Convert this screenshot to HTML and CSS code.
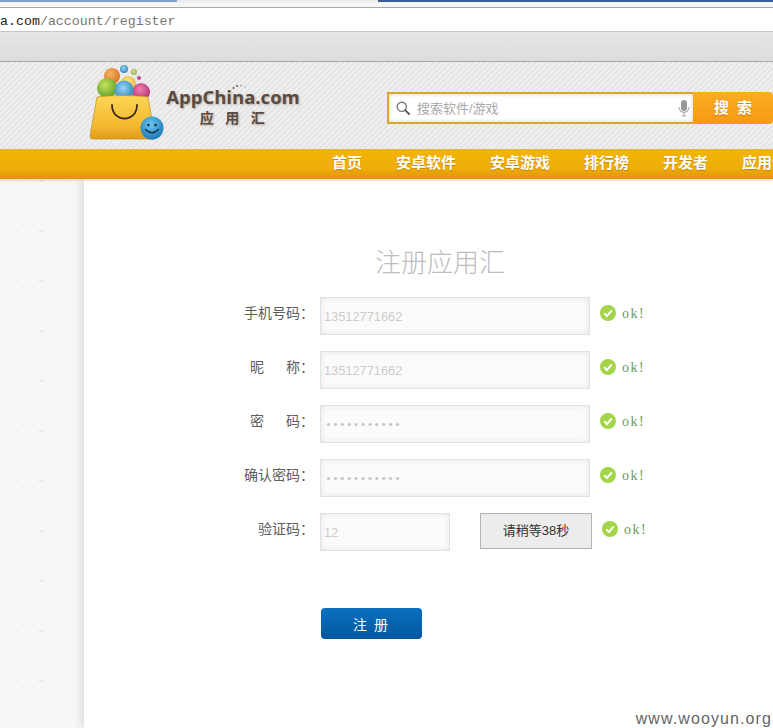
FILE: index.html
```html
<!DOCTYPE html>
<html lang="zh-CN">
<head>
  <meta charset="UTF-8">
  <title>注册应用汇</title>
  <link rel="stylesheet" href="styles.css">
</head>
<body>

  <div class="tabs">
    <span class="tab-left"></span>
    <span class="tab-right"></span>
  </div>
  <div class="urlbar">a.com<span class="url-path">/account/register</span></div>
  <div class="toolbar"></div>

  <div class="header">
    <div class="logo">
      <svg class="logo-bag" viewBox="88 64 80 80" width="80" height="80">
        <defs>
          <radialGradient id="ball-green" cx=".4" cy=".35" r=".75"><stop offset="0" stop-color="#cbe05a"/><stop offset="1" stop-color="#4a9a2a"/></radialGradient>
          <radialGradient id="ball-blue" cx=".45" cy=".4" r=".75"><stop offset="0" stop-color="#96d8f0"/><stop offset="1" stop-color="#1a74b4"/></radialGradient>
          <radialGradient id="ball-pink" cx=".45" cy=".35" r=".75"><stop offset="0" stop-color="#f083b2"/><stop offset="1" stop-color="#a81c6a"/></radialGradient>
          <radialGradient id="ball-orange" cx=".4" cy=".35" r=".75"><stop offset="0" stop-color="#f8b566"/><stop offset="1" stop-color="#d46c18"/></radialGradient>
          <radialGradient id="ball-yellow" cx=".45" cy=".4" r=".75"><stop offset="0" stop-color="#fcec90"/><stop offset="1" stop-color="#e0ac24"/></radialGradient>
          <radialGradient id="ball-lime" cx=".45" cy=".4" r=".75"><stop offset="0" stop-color="#cfe08a"/><stop offset="1" stop-color="#7fa53a"/></radialGradient>
          <radialGradient id="ball-face" cx=".45" cy=".35" r=".7"><stop offset="0" stop-color="#6cc8f2"/><stop offset="1" stop-color="#1672b4"/></radialGradient>
          <linearGradient id="bag-body" x1="0" y1="0" x2="0" y2="1"><stop offset="0" stop-color="#fcd655"/><stop offset=".7" stop-color="#f5b82f"/><stop offset="1" stop-color="#e09a1c"/></linearGradient>
        </defs>
        <circle cx="124" cy="69" r="4" fill="url(#ball-blue)"/>
        <circle cx="134" cy="72" r="3" fill="url(#ball-lime)"/>
        <circle cx="139" cy="78" r="2" fill="#c04a90"/>
        <circle cx="112" cy="76" r="8" fill="url(#ball-orange)"/>
        <circle cx="128" cy="84" r="8" fill="url(#ball-yellow)"/>
        <circle cx="107" cy="88" r="10" fill="url(#ball-green)"/>
        <circle cx="141" cy="92" r="9" fill="url(#ball-pink)"/>
        <circle cx="124" cy="90" r="9.500" fill="url(#ball-blue)"/>
        <path d="M97 97 C112 95 135 95 148 97 L155 137 Q155 139 152 139 L93 139 Q90 139 90 136 Z" fill="url(#bag-body)" stroke="#c58f1e" stroke-width=".7"/>
        <path d="M112 105 C112 123 137 123 137 105" fill="none" stroke="#3a2c16" stroke-width="1.800" stroke-linecap="round"/>
        <circle cx="152" cy="128" r="11.500" fill="url(#ball-face)"/>
        <circle cx="148.500" cy="125" r="1.300" fill="#15304a"/>
        <circle cx="155.500" cy="125" r="1.300" fill="#15304a"/>
        <path d="M145.500 129.500 Q152 136 158.500 129.500" fill="none" stroke="#15304a" stroke-width="1.500" stroke-linecap="round"/>
      </svg>
      <div class="logo-text">
        <svg class="logo-dots" viewBox="0 0 16 6" width="16" height="6">
          <circle cx="1.500" cy="4" r=".9" fill="#5a4a40"/>
          <circle cx="5" cy="2" r=".9" fill="#5a4a40"/>
          <circle cx="9" cy="1.500" r=".7" fill="#7a6a60"/>
          <circle cx="13" cy="3" r=".6" fill="#9a8a80"/>
        </svg>
        <div class="logo-name">AppChina.com</div>
        <div class="logo-sub">应用汇</div>
      </div>
    </div>

    <div class="search">
      <div class="search-box">
        <svg class="search-icon" viewBox="0 0 14 14" width="14" height="14">
          <circle cx="5.800" cy="5.800" r="4.600" fill="none" stroke="#777" stroke-width="1.400"/>
          <path d="M9.200 9.200 L13 13" stroke="#555" stroke-width="1.800" stroke-linecap="round"/>
        </svg>
        <span class="search-hint">搜索软件/游戏</span>
        <svg class="mic-icon" viewBox="0 0 12 17" width="12" height="17">
          <rect x="3" y="0" width="6" height="11" rx="3" fill="#999"/>
          <path d="M1 7 C1 14 11 14 11 7" fill="none" stroke="#aaa" stroke-width="1.200"/>
          <path d="M6 12 L6 16 M3.500 16 L8.500 16" stroke="#aaa" stroke-width="1.200"/>
        </svg>
      </div>
      <div class="search-btn">搜 索</div>
    </div>
  </div>

  <div class="nav">
    <a>首页</a>
    <a>安卓软件</a>
    <a>安卓游戏</a>
    <a>排行榜</a>
    <a>开发者</a>
    <a>应用汇</a>
  </div>

  <div class="page">
    <div class="main">
      <form class="reg-form">
        <h1 class="reg-title">注册应用汇</h1>

        <div class="row">
          <label class="row-label">手机号码：</label>
          <input class="field" type="text" value="13512771662">
          <span class="status"><svg class="ok-icon" viewBox="0 0 16 16" width="16" height="16"><circle cx="8" cy="8" r="8" fill="#a2d548"/><path d="M4.200 8.300 L7 11 L11.800 5.400" fill="none" stroke="#fff" stroke-width="2"/></svg><span class="ok-text">ok!</span></span>
        </div>

        <div class="row">
          <label class="row-label wide">昵 称：</label>
          <input class="field" type="text" value="13512771662">
          <span class="status"><svg class="ok-icon" viewBox="0 0 16 16" width="16" height="16"><circle cx="8" cy="8" r="8" fill="#a2d548"/><path d="M4.200 8.300 L7 11 L11.800 5.400" fill="none" stroke="#fff" stroke-width="2"/></svg><span class="ok-text">ok!</span></span>
        </div>

        <div class="row">
          <label class="row-label wide">密 码：</label>
          <input class="field pass" type="password" value="12345678901">
          <span class="status"><svg class="ok-icon" viewBox="0 0 16 16" width="16" height="16"><circle cx="8" cy="8" r="8" fill="#a2d548"/><path d="M4.200 8.300 L7 11 L11.800 5.400" fill="none" stroke="#fff" stroke-width="2"/></svg><span class="ok-text">ok!</span></span>
        </div>

        <div class="row">
          <label class="row-label">确认密码：</label>
          <input class="field pass" type="password" value="12345678901">
          <span class="status"><svg class="ok-icon" viewBox="0 0 16 16" width="16" height="16"><circle cx="8" cy="8" r="8" fill="#a2d548"/><path d="M4.200 8.300 L7 11 L11.800 5.400" fill="none" stroke="#fff" stroke-width="2"/></svg><span class="ok-text">ok!</span></span>
        </div>

        <div class="row">
          <label class="row-label">验证码：</label>
          <input class="field short" type="text" value="12">
          <button class="wait-btn" type="button">请稍等38秒</button>
          <span class="status"><svg class="ok-icon" viewBox="0 0 16 16" width="16" height="16"><circle cx="8" cy="8" r="8" fill="#a2d548"/><path d="M4.200 8.300 L7 11 L11.800 5.400" fill="none" stroke="#fff" stroke-width="2"/></svg><span class="ok-text">ok!</span></span>
        </div>

        <button class="submit-btn" type="button">注 册</button>
      </form>
    </div>
  </div>

  <div class="watermark">www.wooyun.org</div>

</body>
</html>
```

FILE: styles.css
```css
html, body { margin: 0; padding: 0; }
body { position: relative; width: 773px; height: 728px; overflow: hidden; background: #fff; font-family: "Liberation Sans", "Noto Sans CJK SC", sans-serif; }

.tabs { display: flex; justify-content: space-between; height: 7px; background: linear-gradient(#e4e8ee 0, #f6f6f6 3px); border-bottom: 1px solid #a3a6aa; }
.tab-left { width: 177px; height: 2px; background: #7c9fcc; }
.tab-right { width: 395px; height: 2px; background: #3d5f98; }

.urlbar { height: 23px; line-height: 27px; background: #fff; border-bottom: 1px solid #c6c6c6; font-family: "Liberation Mono", monospace; font-size: 13.3px; color: #222; white-space: nowrap; overflow: hidden; }
.url-path { color: #777; }

.toolbar { height: 29px; background: linear-gradient(#e6e6e6, #dcdcdc); border-bottom: 1px solid #a9a9a9; }

.header { display: flex; justify-content: space-between; height: 87px; background: repeating-linear-gradient(135deg, #efefef 0, #efefef 2px, #e5e5e5 2px, #e5e5e5 4px); }
.logo { display: flex; margin-left: 88px; margin-top: 2px; }
.logo-bag { display: block; }
.logo-text { position: relative; margin-left: -2px; padding-top: 21px; width: 134px; text-align: center; }
.logo-dots { position: absolute; left: 66px; top: 20px; }
.logo-name { font-family: "Open Sans", sans-serif; font-weight: 700; font-size: 18.5px; line-height: 24px; color: #5b4a40; text-shadow: 1px 1px 2px rgba(80,60,40,.35); white-space: nowrap; }
.logo-sub { font-family: "Noto Sans CJK SC", sans-serif; font-weight: 700; font-size: 14px; line-height: 16px; letter-spacing: 11.5px; margin-left: 10px; color: #5b4a40; text-shadow: 1px 1px 2px rgba(80,60,40,.35); }

.search { display: flex; margin-top: 30px; height: 32px; }
.search-box { display: flex; align-items: center; box-sizing: border-box; width: 306px; height: 32px; padding: 0 3px 0 7px; background: #fff; border: 2px solid #dba52e; border-right: 0; box-shadow: inset 0 0 4px rgba(160,130,60,.35); }
.search-icon { margin-right: 7px; }
.search-hint { flex: 1; padding-bottom: 2px; font-size: 13px; color: #a8a8a8; }
.search-btn { width: 80px; line-height: 32px; text-align: center; background: linear-gradient(#fbad24, #f59a12); border-radius: 0 4px 4px 0; color: #fff; font-size: 15px; font-weight: 700; word-spacing: 4px; text-shadow: 0 1px 1px rgba(160,90,0,.5); }

.nav { display: flex; gap: 34px; height: 30px; padding-left: 332px; box-sizing: border-box; line-height: 26px; background: linear-gradient(#f3b405 0, #eeae08 65%, #e3920f 100%); border-top: 1px solid #e8b53c; box-shadow: 0 2px 2px rgba(220,170,90,.35); white-space: nowrap; overflow: hidden; position: relative; }
.nav a { color: #fff; font-size: 15px; font-weight: 700; text-shadow: 0 1px 1px rgba(150,90,0,.5); }

.page { height: 549px; background-color: #f7f7f7; background-image: radial-gradient(ellipse 4px 1.2px at 41px 2px, #e0e0e0 0, transparent 100%), radial-gradient(circle at 17px 2px, #eee 0, #eee .8px, transparent 1.3px), radial-gradient(circle at 67px 2px, #eee 0, #eee .8px, transparent 1.3px); background-size: 84px 50px; }
.main { margin-left: 84px; height: 100%; background: #fff; box-shadow: -4px 0 7px rgba(0,0,0,.09); padding-top: 65px; box-sizing: border-box; }

.reg-form { margin-left: 146px; width: 500px; }
.reg-title { width: 420px; margin: 0 0 19px; height: 34px; line-height: 34px; text-align: center; font-size: 26px; font-weight: 300; color: #bdbdbd; font-family: "Noto Sans CJK SC", sans-serif; }

.row { display: flex; align-items: flex-start; height: 38px; margin-bottom: 16px; }
.row-label { box-sizing: border-box; width: 84px; margin-right: 6px; padding-top: 6px; text-align: right; font-size: 14px; line-height: 20px; color: #5c5c5c; white-space: nowrap; }
.row-label.wide { word-spacing: 18px; }

.field { box-sizing: border-box; width: 270px; height: 38px; margin: 0; padding: 0 3px; border: 1px solid #e2e2e2; outline: 0; background: #fbfbfb; box-shadow: inset 0 0 6px rgba(0,0,0,.09); font-family: "Liberation Sans", sans-serif; font-size: 12.8px; color: #ccc; }
.field.pass { font-family: "Liberation Mono", monospace; font-size: 11.5px; color: #c4c4c4; padding-left: 4px; }
.field.short { width: 130px; }

.status { display: flex; align-items: center; margin-left: 10px; padding-top: 7px; }
.ok-icon { display: block; }
.ok-text { margin-left: 6px; margin-top: 2px; font-family: "Liberation Serif", serif; font-size: 14px; letter-spacing: 1.5px; color: #6d9a58; }

.wait-btn { box-sizing: border-box; width: 112px; height: 36px; margin: 0 0 0 30px; padding: 0 0 3px; background: #ececec; border: 1px solid #b4b4b4; font-family: "Liberation Sans", "Noto Sans CJK SC", sans-serif; font-size: 13px; color: #333; }

.submit-btn { display: block; box-sizing: border-box; width: 101px; height: 31px; margin: 57px 0 0 91px; padding: 0 2px 0 0; border: 0; border-radius: 4px; background: linear-gradient(#0a70bf, #04569f); color: #fff; font-family: "Liberation Sans", "Noto Sans CJK SC", sans-serif; font-size: 14px; word-spacing: 3px; }

.watermark { position: absolute; right: 1px; bottom: 0; font-family: "Liberation Sans", sans-serif; font-size: 16px; letter-spacing: 1.1px; color: #666; }
```
